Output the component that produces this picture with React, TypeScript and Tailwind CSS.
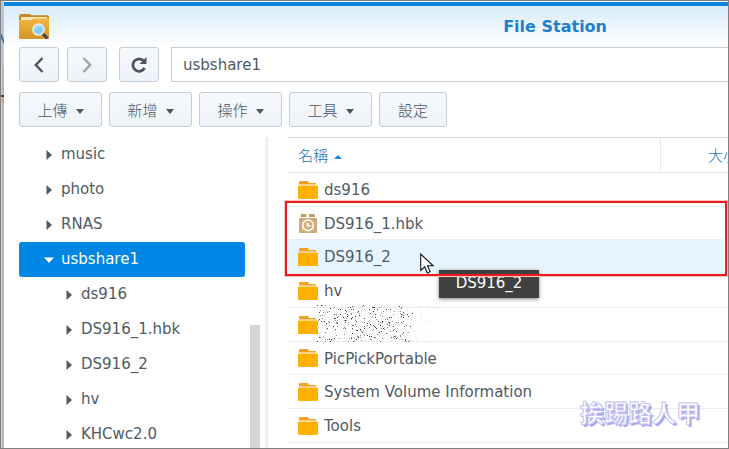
import clsx from "clsx";

type TreeNode = { name: string; depth: number; open?: boolean };
type Entry = { name: string; kind: "folder" | "backup"; active?: boolean };

const actions = ["上傳", "新增", "操作", "工具"];

const tree: TreeNode[] = [
  { name: "music", depth: 0 },
  { name: "photo", depth: 0 },
  { name: "RNAS", depth: 0 },
  { name: "usbshare1", depth: 0, open: true },
  { name: "ds916", depth: 1 },
  { name: "DS916_1.hbk", depth: 1 },
  { name: "DS916_2", depth: 1 },
  { name: "hv", depth: 1 },
  { name: "KHCwc2.0", depth: 1 },
];

const entries: Entry[] = [
  { name: "ds916", kind: "folder" },
  { name: "DS916_1.hbk", kind: "backup" },
  { name: "DS916_2", kind: "folder", active: true },
  { name: "hv", kind: "folder" },
  { name: "", kind: "folder" },
  { name: "PicPickPortable", kind: "folder" },
  { name: "System Volume Information", kind: "folder" },
  { name: "Tools", kind: "folder" },
];

const buttonClass =
  "flex h-[35px] items-center justify-center rounded-[3px] border border-[#c3ced8] bg-linear-to-b from-[#f6f9fc] to-[#eef3f9] text-[#4b5561]";

function AppLogo() {
  return (
    <svg viewBox="0 0 30 26" className="h-[26px] w-[30px]" aria-hidden="true">
      <defs>
        <linearGradient id="logo-body" x1="0" y1="0" x2="0" y2="1">
          <stop offset="0" stopColor="#f3b63d" />
          <stop offset="1" stopColor="#d39527" />
        </linearGradient>
      </defs>
      <path d="M0 2.5Q0 0 2 0h8.500q1.500 0 2 1.200H28.500q1.500 0 1.500 1.500V10H0z" fill="#c88a22" />
      <path d="M2 3h26v4H2z" fill="#f7e3b4" />
      <path d="M0 6h12.500l2-1.500H30v19q0 1.500-1.500 1.500h-27Q0 25 0 23.500z" fill="url(#logo-body)" />
      <path d="m23 19 5.500 5.500" stroke="#45494c" strokeWidth="3" />
      <circle cx="19.500" cy="15.500" r="5.500" fill="#86cdf5" stroke="#e5edef" strokeWidth="1.600" />
      <path d="M16 15a3.800 3.800 0 0 1 6-2.500" fill="none" stroke="#b7e3fb" strokeWidth="1.500" />
    </svg>
  );
}

function FolderIcon() {
  return (
    <svg viewBox="0 0 20 18" className="h-[18px] w-5 shrink-0" aria-hidden="true">
      <path d="M1 1q0-1 1-1h7.500q.700 0 1 .800L11 2h6.500q.700 0 .700 1v.500H1z" fill="#f5a01e" />
      <rect y="4.500" width="20" height="13.500" rx="1" fill="#ffb000" />
    </svg>
  );
}

function BackupIcon() {
  return (
    <svg viewBox="0 0 20 19" className="h-[19px] w-5 shrink-0" aria-hidden="true">
      <path d="M3 0h5.500v3H2.500zM11 0h5.500l.500 3h-6z" fill="#c39c67" />
      <rect x="1" y="4" width="18" height="15" rx="1" fill="#cfac7c" />
      <circle cx="10" cy="11.300" r="5.300" fill="#cfac7c" stroke="#fff" strokeWidth="1.600" />
      <path d="M9.500 8.500v3.300h3.200" fill="none" stroke="#fff" strokeWidth="1.500" />
    </svg>
  );
}

function Chevron({ flip }: { flip?: boolean }) {
  return (
    <svg viewBox="0 0 10 16" className={clsx("h-4 w-[10px]", flip && "rotate-180")} aria-hidden="true">
      <path d="M8.500 1 1.800 8l6.700 7" fill="none" stroke="currentColor" strokeWidth="2.400" />
    </svg>
  );
}

function ReloadIcon() {
  return (
    <svg viewBox="0 0 16 16" className="h-4 w-4" aria-hidden="true">
      <path d="M12.800 4A6.200 6.200 0 1 0 13.600 11" fill="none" stroke="currentColor" strokeWidth="2.800" />
      <path d="M15.500 0v7H8.500z" fill="currentColor" />
    </svg>
  );
}

function Cursor() {
  return (
    <svg viewBox="0 0 15 21" className="h-[21px] w-[15px]" aria-hidden="true">
      <path
        d="M.700 1v16.500l4-3.700 2.600 6.200 2.800-1.200-2.600-6h5.700z"
        fill="#fff"
        stroke="#111827"
        strokeWidth="1.100"
      />
    </svg>
  );
}

// Sprayed pixels that hide a folder name
function Spray() {
  let seed = 41;
  const next = () => {
    seed = (seed * 16807) % 2147483647;
    return seed / 2147483647;
  };
  const dots = Array.from({ length: 560 }, () => {
    const x = Math.floor(next() * (70 + next() * 50));
    const y = Math.floor(next() * 37);
    const shade = next();
    const dark = x < 96 && shade > 0.5;
    return { x, y, fill: dark ? (shade > 0.75 ? "#3f4448" : "#8a9094") : "#dfe5e9" };
  });
  return (
    <svg viewBox="0 0 120 37" className="h-[37px] w-[120px]" shapeRendering="crispEdges" aria-hidden="true">
      {dots.map((dot, i) => (
        <rect key={i} x={dot.x} y={dot.y} width="1" height="1" fill={dot.fill} />
      ))}
    </svg>
  );
}

// Sliver of the desktop that shows beside the window
function DesktopEdge() {
  return (
    <div className="w-[3px] shrink-0 bg-[#d8d2d1] shadow-[inset_-2px_0_2px_rgba(0,0,0,0.15)]">
      <svg viewBox="0 0 3 110" className="h-[110px] w-[3px]" aria-hidden="true">
        <path d="M0 0h3v65H0z" fill="#b9c8d6" />
        <path d="m0 32 3 7v4l-3-6z" fill="#2f6fae" />
        <path d="M0 94h3v2H0z" fill="#3c4650" />
        <path d="M1 98h2v4H1z" fill="#d39a6a" />
      </svg>
    </div>
  );
}

function Header() {
  return (
    <header className="flex h-[41px] items-center bg-linear-to-b from-[#d8ebfa] to-white pl-[15px]">
      <AppLogo />
      <h1 className="flex-1 pr-[121px] text-right text-base font-bold text-[#1f7fca]">
        File Station
      </h1>
    </header>
  );
}

function Toolbar() {
  return (
    <div className="pl-[15px]">
      <div className="flex">
        <button type="button" aria-label="Back" className={clsx(buttonClass, "w-10")}>
          <Chevron />
        </button>
        <button type="button" aria-label="Forward" className={clsx(buttonClass, "ml-2 w-10")}>
          <span className="opacity-50">
            <Chevron flip />
          </span>
        </button>
        <button type="button" aria-label="Reload" className={clsx(buttonClass, "ml-3 w-10")}>
          <ReloadIcon />
        </button>
        <input
          type="text"
          aria-label="Path"
          defaultValue="usbshare1"
          className="ml-3 h-[35px] min-w-0 flex-1 border border-r-0 border-[#c3ced4] bg-white px-[11px] text-[#505a64] outline-none"
        />
      </div>
      <div className="mt-[10px] flex gap-[7px]">
        {actions.map((label) => (
          <button key={label} type="button" className={clsx(buttonClass, "w-[83px] gap-2 pt-[3px] font-light")}>
            {label}
            <svg viewBox="0 0 8 5" className="h-[5px] w-2" aria-hidden="true">
              <path d="M0 0h8L4 5z" fill="currentColor" />
            </svg>
          </button>
        ))}
        <button type="button" className={clsx(buttonClass, "w-[68px] pt-[3px] font-light")}>
          設定
        </button>
      </div>
    </div>
  );
}

function Sidebar() {
  return (
    <nav className="relative w-[264px] shrink-0 overflow-hidden pl-[15px]">
      <ul>
        {tree.map((node) => (
          <li key={node.name}>
            <button
              type="button"
              aria-expanded={Boolean(node.open)}
              className={clsx(
                "flex h-[35px] w-[226px] items-center rounded-[3px] text-left",
                node.depth === 0 ? "pl-6" : "pl-11",
                node.open ? "bg-[#0086e5] text-white" : "text-[#505a64]",
              )}
            >
              <svg viewBox="0 0 12 12" className="mr-[6px] h-3 w-3 shrink-0" aria-hidden="true">
                <path d={node.open ? "M1 3.500h10L6 9z" : "M3.500 1v10L9 6z"} fill="currentColor" />
              </svg>
              {node.name}
            </button>
          </li>
        ))}
      </ul>
      <div className="absolute top-[188px] right-2 bottom-0 w-[10px] bg-[#d3d5d8]" />
      <div className="absolute inset-y-0 right-0 w-1 bg-linear-to-r from-white to-[#e4e4e4]" />
    </nav>
  );
}

function FileList() {
  return (
    <main className="relative min-w-0 flex-1 pl-5">
      <table className="w-full table-fixed border-separate border-spacing-0 border-t border-[#d7dfe4] text-left">
        <thead>
          <tr className="h-[35px] text-[#1673bb]">
            <th scope="col" className="border-b border-[#e4eaed] p-0 pt-[3px] pl-[10px] font-light">
              <span className="flex items-center gap-[6px]">
                名稱
                <svg viewBox="0 0 8 4" className="h-1 w-2" aria-hidden="true">
                  <path d="M0 4h8L4 0z" fill="#1f8ad6" />
                </svg>
              </span>
            </th>
            <th
              scope="col"
              className="w-[68px] overflow-hidden border-b border-l border-[#e4eaed] p-0 pt-[3px] pl-[47px] font-light whitespace-nowrap"
            >
              大小
            </th>
          </tr>
        </thead>
        <tbody>
          {entries.map((entry, i) => (
            <tr
              key={i}
              className={clsx(
                "h-[34px] text-[#505a64] nth-[4n+2]:h-[33px]",
                entry.active && "bg-[#e6f4fe]",
              )}
            >
              <td colSpan={2} className="border-b border-[#e8edf0] p-0 pl-[10px]">
                <span className="flex items-center gap-[6px]">
                  {entry.kind === "folder" ? <FolderIcon /> : <BackupIcon />}
                  <span className="pt-[2px]">{entry.name}</span>
                </span>
              </td>
            </tr>
          ))}
        </tbody>
      </table>

      <div className="absolute top-[168px] left-[49px]">
        <Spray />
      </div>
      <div
        role="tooltip"
        className="absolute top-[133px] left-[171px] flex h-7 w-[100px] items-center justify-center bg-[#404040] pb-[2px] text-white shadow-[0_1px_4px_rgba(0,0,0,0.5)]"
      >
        DS916_2
      </div>
      <div className="absolute top-16 right-px left-[17px] h-[75px] border-2 border-[#ec1c1c] shadow-[inset_-2px_0_0_#fff] ring-1 ring-[#fbc4c4]" />
      <div className="absolute top-[116px] left-[152px]">
        <Cursor />
      </div>
      <p className="absolute right-7 bottom-5 font-['Noto_Sans_CJK_TC',sans-serif] text-2xl font-bold text-white [-webkit-text-stroke:1px_#c6c3f4] [text-shadow:2px_2px_0_#aaa6ee]">
        挨踢路人甲
      </p>
    </main>
  );
}

export default function App() {
  return (
    <div className="flex h-screen overflow-hidden border border-[#808080] bg-white font-['DejaVu_Sans','Noto_Sans_CJK_TC',sans-serif] text-[15px]">
      <DesktopEdge />
      <div className="flex min-w-0 flex-1 flex-col overflow-hidden pt-px">
        <div className="h-1 shrink-0 bg-[#0d82dc]" />
        <Header />
        <Toolbar />
        <div className="mt-[10px] flex min-h-0 flex-1">
          <Sidebar />
          <FileList />
        </div>
      </div>
    </div>
  );
}
